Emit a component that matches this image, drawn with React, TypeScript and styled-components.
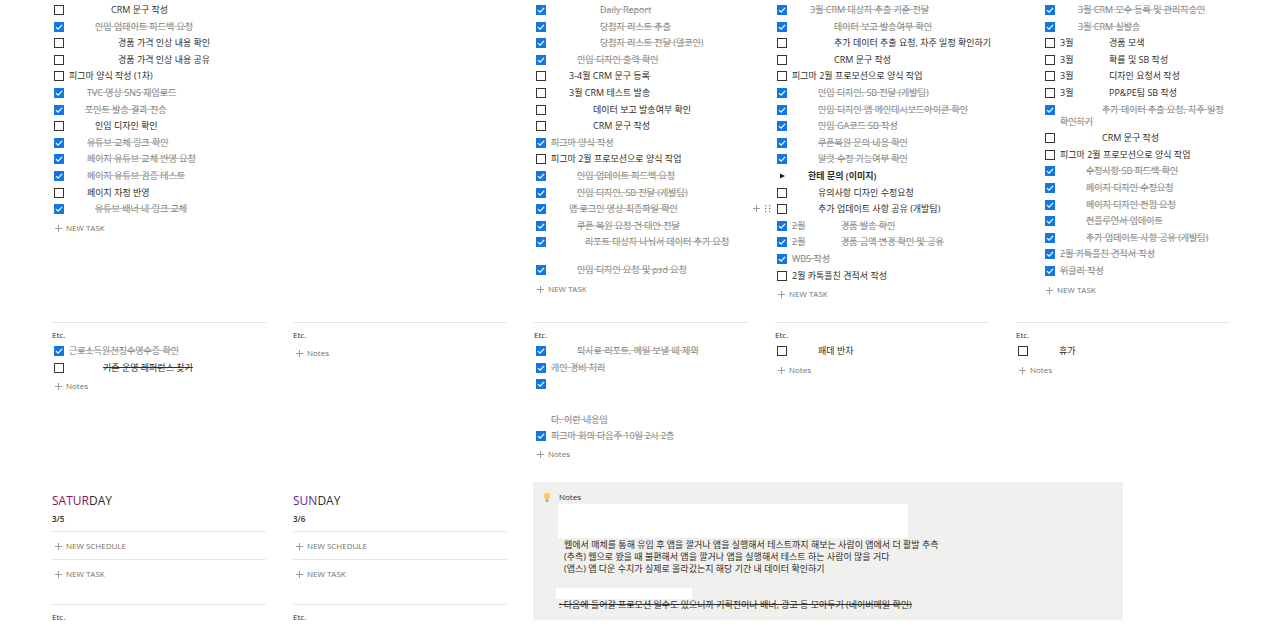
import React from "react";
import styled, { createGlobalStyle, css } from "styled-components";

const GlobalStyle = createGlobalStyle`
  *, *::before, *::after { box-sizing: border-box; }
  body {
    margin: 0;
    background: #fff;
    color: #2f2d28;
    font-family: "Open Sans", "Noto Sans CJK KR", sans-serif;
    font-size: 9px;
    line-height: 12px;
  }
`;

type State = "open" | "done" | "struck";

interface Task {
  lines: string[];
  indent?: number;
  prefix?: string;
  state?: State;
  toggle?: boolean;
  handles?: boolean;
}

const open = (indent: number, text: string, extra: Partial<Task> = {}): Task => ({
  lines: [text],
  indent,
  state: "open",
  ...extra,
});
const done = (indent: number, text: string, extra: Partial<Task> = {}): Task => ({
  lines: [text],
  indent,
  state: "done",
  ...extra,
});

const monday: Task[] = [
  open(42, "CRM 문구 작성"),
  done(26, "인입 업데이트 피드백 요청"),
  open(49, "경품 가격 인상 내용 확인"),
  open(49, "경품 가격 인상 내용 공유"),
  open(0, "피그마 양식 작성 (1차)"),
  done(18, "TVC 영상 SNS 재업로드"),
  done(16, "포인트 발송 결과 전송"),
  open(26, "인입 디자인 확인"),
  done(18, "유튜브 교체 링크 확인"),
  done(18, "페이지 유튜브 교체 반영 요청"),
  done(18, "페이지 유튜브 검증 테스트"),
  open(18, "페이지 자정 반영"),
  done(26, "유튜브 배너 내 링크 교체"),
];

const wednesday: Task[] = [
  done(49, "Daily Report"),
  done(49, "당첨자 리스트 추출"),
  done(49, "당첨자 리스트 전달 (델코인)"),
  done(26, "인입 디자인 출력 확인"),
  open(18, "3-4월 CRM 문구 등록"),
  open(18, "3월 CRM 테스트 발송"),
  open(42, "데이터 보고 발송여부 확인"),
  open(42, "CRM 문구 작성"),
  done(0, "피그마 양식 작성"),
  open(0, "피그마 2월 프로모션으로 양식 작업"),
  done(26, "인입 업데이트 피드백 요청"),
  done(26, "인입 디자인, SB 전달 (개발팀)"),
  done(18, "앱 로그인 영상 최종파일 확인"),
  done(26, "쿠폰 복원 요청 건 대안 전달"),
  done(34, "", { lines: ["리포트 대상자 나눠서 데이터 추가 요청", ""] }),
  done(26, "인입 디자인 요청 및 psd 요청"),
];

const thursday: Task[] = [
  done(18, "3월 CRM 대상자 추출 기준 전달"),
  done(42, "데이터 보고 발송여부 확인"),
  open(42, "추가 데이터 추출 요청, 차주 일정 확인하기"),
  open(42, "CRM 문구 작성"),
  open(0, "피그마 2월 프로모션으로 양식 작업"),
  done(26, "인입 디자인, SB 전달 (개발팀)"),
  done(26, "인입 디자인 앱 메인대시보드아이콘 확인"),
  done(26, "인입 GA코드 SB 작성"),
  done(26, "쿠폰복원 문의 내용 확인"),
  done(26, "알럿 수정 가능여부 확인"),
  open(16, "한테 문의 (이미지)", { toggle: true }),
  open(26, "유의사항 디자인 수정요청"),
  open(26, "추가 업데이트 사항 공유 (개발팀)", { handles: true }),
  done(0, "경품 발송 확인", { prefix: "2월" }),
  done(0, "경품 금액 변경 확인 및 공유", { prefix: "2월" }),
  done(0, "WBS 작성"),
  open(0, "2월 카톡플친 견적서 작성"),
];

const friday: Task[] = [
  done(18, "3월 CRM 모수 등록 및 관리자승인"),
  done(18, "3월 CRM 실발송"),
  open(0, "경품 모색", { prefix: "3월" }),
  open(0, "확률 및 SB 작성", { prefix: "3월" }),
  open(0, "디자인 요청서 작성", { prefix: "3월" }),
  open(0, "PP&PE팀 SB 작성", { prefix: "3월" }),
  done(42, "", { lines: ["추가 데이터 추출 요청, 차주 일정", "확인하기"] }),
  open(42, "CRM 문구 작성"),
  open(0, "피그마 2월 프로모션으로 양식 작업"),
  done(26, "수정사항 SB 피드백 확인"),
  done(26, "페이지 디자인 수정요청"),
  done(26, "페이지 디자인 컨펌 요청"),
  done(26, "컨플루언서 업데이트"),
  done(26, "추가 업데이트 사항 공유 (개발팀)"),
  done(0, "2월 카톡플친 견적서 작성"),
  done(0, "위클리 작성"),
];

const days: { name: string; tasks?: Task[]; nested?: boolean; etc: Task[] }[] = [
  {
    name: "Monday",
    tasks: monday,
    etc: [
      done(0, "근로소득원천징수영수증 확인"),
      open(34, "기존 운영 레퍼런스 찾기", { state: "struck" }),
    ],
  },
  { name: "Tuesday", etc: [] },
  {
    name: "Wednesday",
    tasks: wednesday,
    etc: [
      done(26, "퇴사로 리포트, 메일 보낼 때 제외"),
      done(0, "개인 경비 처리"),
      done(0, "", { lines: ["", "", "", "다. 이런 내용임"] }),
      done(0, "피그마 회의 다음주 10일 2시 2층"),
    ],
  },
  { name: "Thursday", tasks: thursday, etc: [open(26, "패데 반차")] },
  { name: "Friday", tasks: friday, nested: true, etc: [open(26, "휴가")] },
];

const Page = styled.main`
  padding: 2px 50px 5px 52px;
`;

const Columns = styled.div`
  display: grid;
  grid-template-columns: repeat(5, minmax(0, 1fr));
  column-gap: 27px;
`;

const TaskColumn = styled.section<{ $nested?: boolean }>`
  padding: 0 0 18px ${(p) => (p.$nested ? 29 : 2)}px;
`;

const EtcColumn = styled.section`
  border-top: 1px solid #e6e6e4;
  padding: 6px 0 18px;
`;

const Label = styled.h3`
  margin: 0 0 2px;
  font-size: 8px;
  font-weight: 400;
  line-height: 12px;
`;

const Indented = styled.div`
  padding-left: 2px;
`;

const List = styled.ul`
  margin: 0;
  padding: 0;
  list-style: none;
  display: grid;
  grid-auto-rows: minmax(17px, auto) minmax(16px, auto) minmax(17px, auto) minmax(16px, auto) minmax(17px, auto);
`;

const Row = styled.li`
  position: relative;
  padding: 2px 0;
`;

const RowLabel = styled.label`
  display: flex;
  align-items: flex-start;
  gap: 5px;
`;

const Box = styled.span`
  display: grid;
  flex: none;
  width: 10px;
  height: 12px;
  align-items: center;
  > * {
    grid-area: 1 / 1;
  }
`;

const Check = styled.input`
  appearance: none;
  width: 10px;
  height: 10px;
  margin: 0;
  border: 1px solid #37352f;
  background: #fff;
  &:checked {
    border-color: #1277e1;
    background: #1277e1;
  }
  & + svg {
    display: none;
  }
  &:checked + svg {
    display: block;
    pointer-events: none;
  }
`;

const TaskText = styled.span<{ $state: State; $bold?: boolean }>`
  white-space: nowrap;
  font-weight: ${(p) => (p.$bold ? 600 : 400)};
  ${(p) =>
    p.$state === "done" &&
    css`
      color: #7d7c78;
      text-decoration: line-through #bdbcb9;
    `}
  ${(p) =>
    p.$state === "struck" &&
    css`
      text-decoration: line-through;
    `}
`;

const Line = styled.span<{ $indent: number }>`
  display: block;
  min-height: 12px;
  padding-left: ${(p) => p.$indent}px;
`;

const Prefix = styled.span`
  display: inline-flex;
  width: 49px;
`;

const Struck = styled.span`
  text-decoration: line-through #bdbcb9;
`;

const Toggle = styled.button`
  display: grid;
  place-items: center;
  flex: none;
  width: 10px;
  height: 12px;
  padding: 0;
  border: 0;
  background: none;
`;

const Handles = styled.div`
  position: absolute;
  right: 100%;
  top: 3px;
  display: flex;
  gap: 5px;
  padding-right: 6px;
`;

const AddButton = styled.button`
  display: flex;
  align-items: center;
  gap: 4px;
  height: 20px;
  padding: 0;
  border: 0;
  background: none;
  color: #72716d;
  font: inherit;
  font-size: 8px;
`;

const DayHeader = styled.header`
  padding: 11px 0 6px;
`;

const DayName = styled.h2`
  margin: 0 0 4px;
  font-size: 12px;
  font-weight: 400;
  line-height: 16px;
`;

const Tint = styled.span<{ $color: string }>`
  color: ${(p) => p.$color};
`;

const DateText = styled.p`
  margin: 0;
  font-size: 8px;
  font-weight: 600;
`;

const Slot = styled.div<{ $tall?: boolean }>`
  border-top: 1px solid #e6e6e4;
  padding: 4px 0 ${(p) => (p.$tall ? 20 : 3)}px 2px;
`;

const WeekendEtc = styled(EtcColumn)`
  padding-bottom: 0;
`;

const Callout = styled.aside`
  grid-column: 3 / 6;
  align-self: start;
  display: flex;
  gap: 7px;
  margin: 0 107px 0 -1px;
  padding: 9px 10px;
  border-radius: 2px;
  background: #f0f0ee;
`;

const Bulb = styled.svg`
  flex: none;
  margin-top: 1px;
`;

const CalloutBody = styled.div`
  flex: 1;
  min-width: 0;
`;

const CalloutTitle = styled.h3`
  margin: 0 0 1px;
  padding-left: 1px;
  font-size: 8px;
  font-weight: 400;
  line-height: 12px;
`;

const Blank = styled.div<{ $size: "large" | "small" }>`
  background: #fff;
  ${(p) =>
    p.$size === "large"
      ? css`
          width: 350px;
          max-width: 100%;
          height: 34px;
          margin-bottom: 1px;
        `
      : css`
          width: 136px;
          height: 11px;
          margin: 13px 0 0 -2px;
        `}
`;

const Paragraph = styled.p<{ $struck?: boolean }>`
  margin: 0;
  padding-left: ${(p) => (p.$struck ? 1 : 6)}px;
  text-decoration: ${(p) => (p.$struck ? "line-through" : "none")};
`;

const PlusIcon = () => (
  <svg width="8" height="9" viewBox="0 0 8 9" aria-hidden="true">
    <path d="M4.5 1v7M1 4.5h7" stroke="#9b9a97" strokeWidth="1" fill="none" />
  </svg>
);

function Add({ children }: { children: React.ReactNode }) {
  return (
    <AddButton type="button">
      <PlusIcon />
      {children}
    </AddButton>
  );
}

function TaskRow({ task }: { task: Task }) {
  const state = task.state ?? "open";
  const text = (
    <TaskText $state={state} $bold={task.toggle}>
      {task.lines.map((line, i) => (
        <Line key={i} $indent={i === 0 ? task.indent ?? 0 : 0}>
          {task.prefix && (
            <Prefix>{state === "done" ? <Struck>{task.prefix}</Struck> : task.prefix}</Prefix>
          )}
          {line}
        </Line>
      ))}
    </TaskText>
  );
  if (task.toggle) {
    return (
      <Row>
        <RowLabel as="div">
          <Toggle type="button" aria-label="Expand">
            <svg width="5" height="6" viewBox="0 0 5 6">
              <path d="M0 0.5L5 3L0 5.5Z" fill="#1f1e1b" />
            </svg>
          </Toggle>
          {text}
        </RowLabel>
      </Row>
    );
  }
  return (
    <Row>
      {task.handles && (
        <Handles>
          <PlusIcon />
          <svg width="6" height="9" viewBox="0 0 6 9" aria-hidden="true">
            {[1, 4, 7].map((y) => (
              <g key={y} fill="#7f7e7a">
                <rect x="0" y={y} width="1.3" height="1.3" />
                <rect x="4" y={y} width="1.3" height="1.3" />
              </g>
            ))}
          </svg>
        </Handles>
      )}
      <RowLabel>
        <Box>
          <Check type="checkbox" defaultChecked={state === "done"} />
          <svg width="10" height="10" viewBox="0 0 10 10" aria-hidden="true">
            <path d="M2 5.1L4.1 7.2L8.1 2.9" stroke="#fff" strokeWidth="1.2" fill="none" />
          </svg>
        </Box>
        {text}
      </RowLabel>
    </Row>
  );
}

function TaskList({ tasks }: { tasks: Task[] }) {
  return (
    <List>
      {tasks.map((task, i) => (
        <TaskRow key={i} task={task} />
      ))}
    </List>
  );
}

function WeekendDay({ tinted, color, date }: { tinted: string; color: string; date: string }) {
  return (
    <section>
      <DayHeader>
        <DayName>
          <Tint $color={color}>{tinted}</Tint>DAY
        </DayName>
        <DateText>{date}</DateText>
      </DayHeader>
      <Slot>
        <Add>NEW SCHEDULE</Add>
      </Slot>
      <Slot $tall>
        <Add>NEW TASK</Add>
      </Slot>
      <WeekendEtc as="div">
        <Label>Etc.</Label>
      </WeekendEtc>
    </section>
  );
}

export default function App() {
  return (
    <>
      <GlobalStyle />
      <Page>
        <Columns>
          {days.map((day) => (
            <TaskColumn key={day.name} $nested={day.nested} aria-label={day.name}>
              {day.tasks && (
                <>
                  <TaskList tasks={day.tasks} />
                  <Add>NEW TASK</Add>
                </>
              )}
            </TaskColumn>
          ))}
        </Columns>
        <Columns>
          {days.map((day) => (
            <EtcColumn key={day.name}>
              <Label>Etc.</Label>
              <Indented>
                <TaskList tasks={day.etc} />
                <Add>Notes</Add>
              </Indented>
            </EtcColumn>
          ))}
        </Columns>
        <Columns>
          <WeekendDay tinted="SATUR" color="#8a1250" date="3/5" />
          <WeekendDay tinted="SUN" color="#5a2a91" date="3/6" />
          <Callout>
            <Bulb width="8" height="11" viewBox="0 0 8 11" aria-hidden="true">
              <path d="M4 0.5C1.9 0.5 0.7 2 0.7 3.8C0.7 5.4 2 6 2.3 7.8H5.7C6 6 7.3 5.4 7.3 3.8C7.3 2 6.1 0.5 4 0.5Z" fill="#fbcf62" />
              <path d="M3 4.2L3.6 7.6H4.4L5 4.2" stroke="#f2a93b" strokeWidth="0.5" fill="none" />
              <path d="M2.4 7.8H5.6V9.4L4.8 10.3H3.2L2.4 9.4Z" fill="#9fb2cf" />
            </Bulb>
            <CalloutBody>
              <CalloutTitle>Notes</CalloutTitle>
              <Blank $size="large" />
              <Paragraph>
                웹에서 매체를 통해 유입 후 앱을 깔거나 앱을 실행해서 테스트까지 해보는 사람이 앱에서 더 활발 추측
              </Paragraph>
              <Paragraph>
                (추측) 웹으로 봤을 때 불편해서 앱을 깔거나 앱을 실행해서 테스트 하는 사람이 많을 거다
              </Paragraph>
              <Paragraph>(앱스) 앱 다운 수치가 실제로 올라갔는지 해당 기간 내 데이터 확인하기</Paragraph>
              <Blank $size="small" />
              <Paragraph $struck>
                : 다음에 들어갈 프로모션 일수도 있으니까 기획전이나 배너, 광고 등 모아두기 (네이버메일 확인)
              </Paragraph>
            </CalloutBody>
          </Callout>
        </Columns>
      </Page>
    </>
  );
}
